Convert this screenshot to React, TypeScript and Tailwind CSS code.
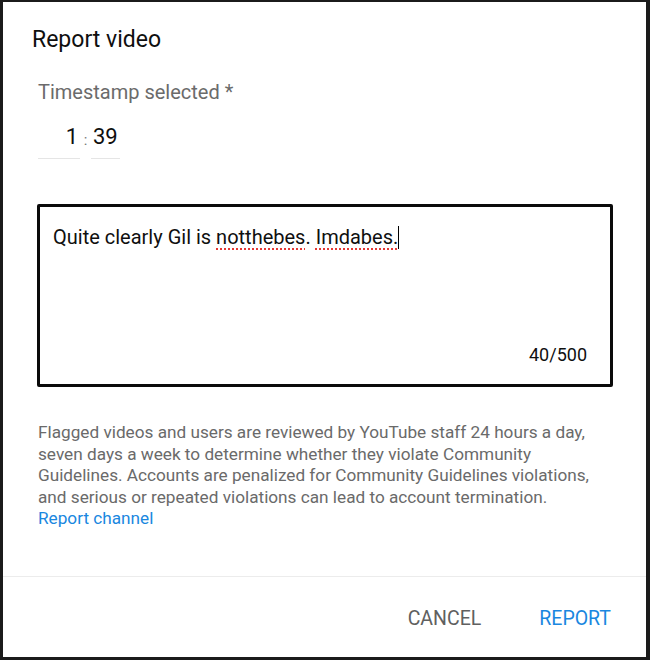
export default function App() {
  return (
    <div className="w-[650px] h-[660px] bg-[#1b1b1b] pl-[3px] pt-[2px] pr-[4px] pb-[3px] font-['Roboto',sans-serif]">
      <div className="w-full h-full bg-white flex flex-col">
        <div className="flex-1 pl-[29px] pr-[33px]">
          <h1 className="pt-[24px] text-[23px] leading-[28px] text-[#0f0f0f]">Report video</h1>

          <div className="pl-[6px] pt-[26px]">
            <p className="text-[20px] leading-[24px] text-[#6b6b6b]">Timestamp selected *</p>
            <div className="flex items-end mt-[19px]">
              <div className="w-[42px] border-b border-[#e5e5e5] text-right pr-[2px] pb-[7px] text-[22px] leading-[28px] text-[#0f0f0f]">
                1
              </div>
              <span className="w-[11px] text-center pb-[9px] text-[15px] leading-[20px] text-[#777]">:</span>
              <div className="w-[29px] border-b border-[#e5e5e5] pb-[7px] pl-[2px] text-[22px] leading-[28px] text-[#0f0f0f]">
                39
              </div>
            </div>
          </div>

          <div className="mt-[45px] ml-[5px] h-[183px] border-[3px] border-[#0a0a0a] rounded-[2px] flex flex-col px-[13px] pt-[18px] pb-[18px]">
            <p className="flex-1 text-[20px] leading-[24px] text-[#0f0f0f]">
              Quite clearly Gil is{" "}
              <span className="underline decoration-dotted decoration-[#e53935] decoration-2 underline-offset-[4px]">notthebes</span>.{" "}
              <span className="underline decoration-dotted decoration-[#e53935] decoration-2 underline-offset-[4px]">Imdabes.</span>
              <span className="inline-block w-px h-[23px] bg-black align-[-5px]"></span>
            </p>
            <p className="self-end pr-[10px] text-[18px] leading-[22px] text-[#0f0f0f]">40/500</p>
          </div>

          <div className="pl-[6px] pt-[35px] text-[17.2px] leading-[21.5px] text-[#6a6a6a] whitespace-nowrap">
            <p>
              Flagged videos and users are reviewed by YouTube staff 24 hours a day,
              <br />
              seven days a week to determine whether they violate Community
              <br />
              Guidelines. Accounts are penalized for Community Guidelines violations,
              <br />
              and serious or repeated violations can lead to account termination.
            </p>
            <a className="text-[#1a87e0]">Report channel</a>
          </div>
        </div>

        <div className="border-t border-[#ececec] h-[81px] flex justify-end items-center gap-[58px] pr-[35px] pt-[4px] text-[19.5px]">
          <button className="uppercase text-[#606060]">Cancel</button>
          <button className="uppercase text-[#1a87e0]">Report</button>
        </div>
      </div>
    </div>
  );
}
